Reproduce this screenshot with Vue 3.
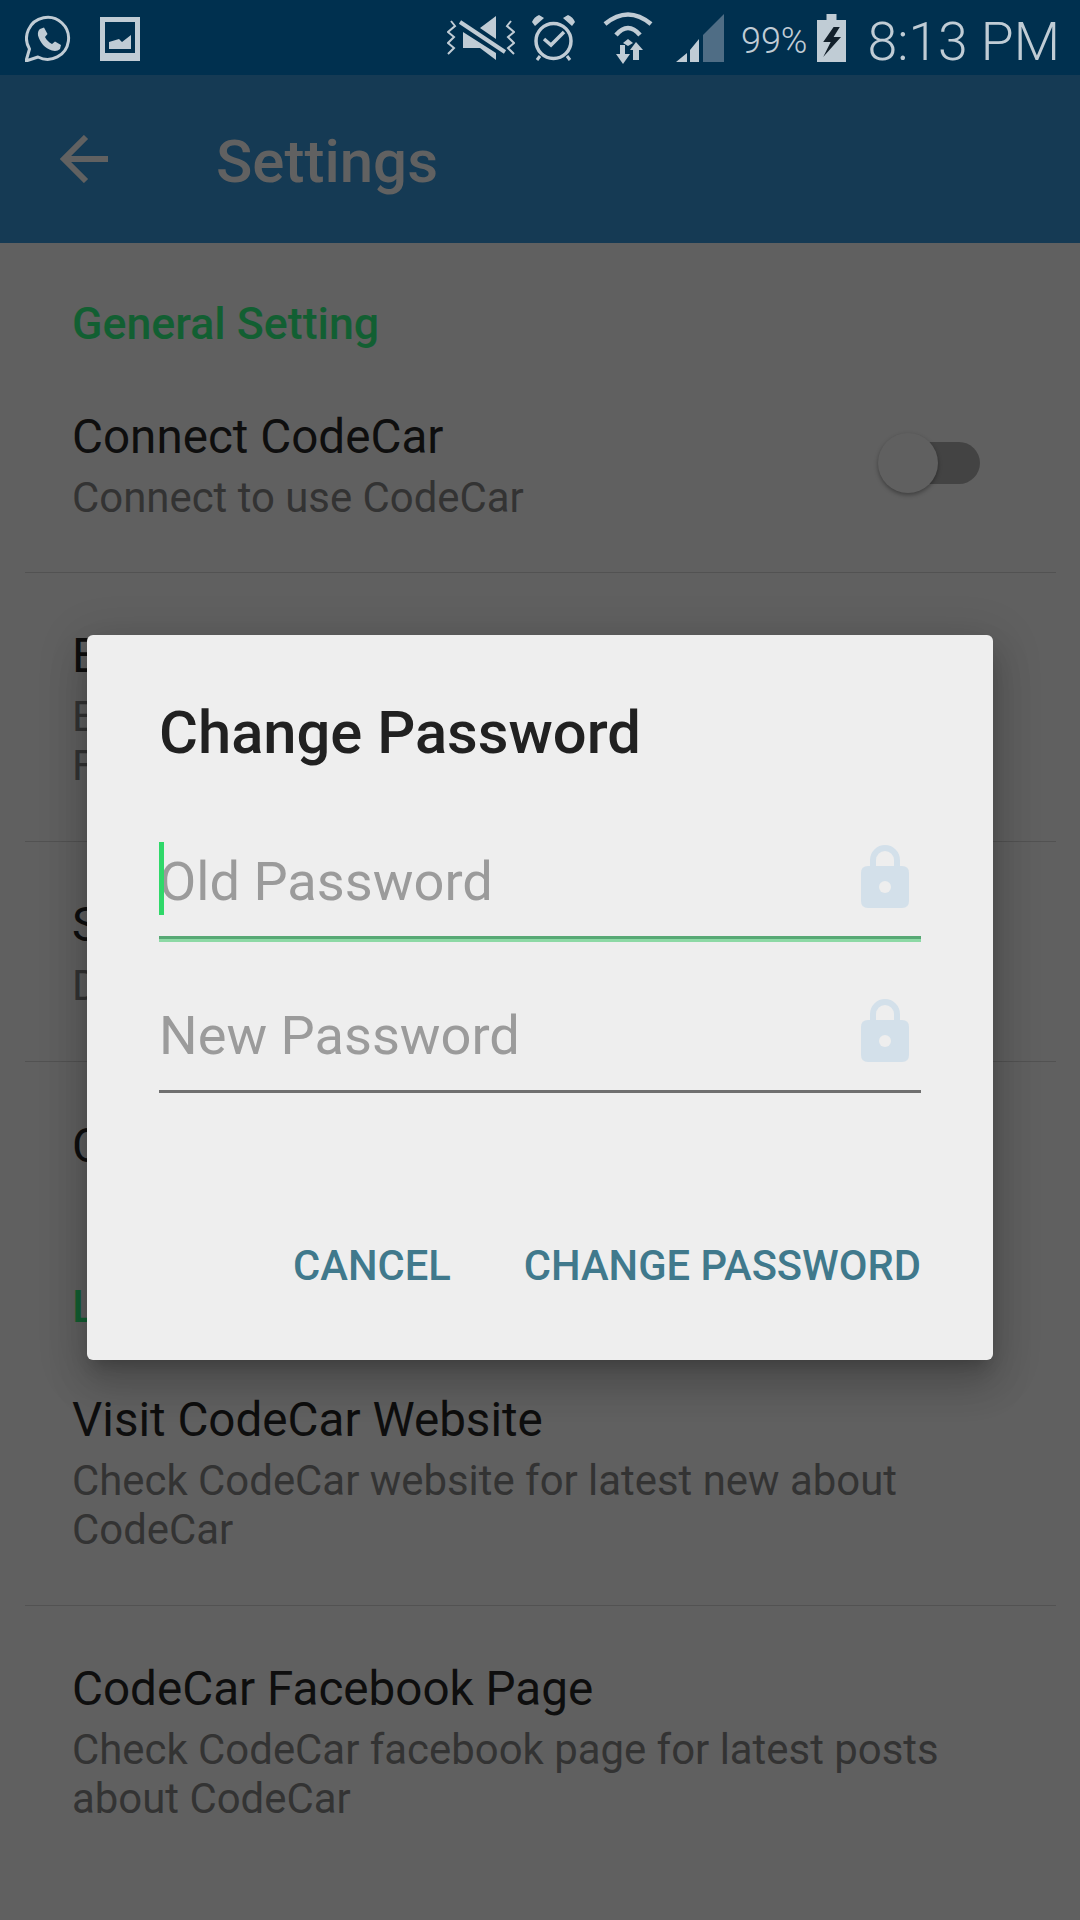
<script setup>
const lockPath = 'M9 21V15A15 15 0 0 1 39 15V21H41Q48 21 48 28V56Q48 63 41 63H7Q0 63 0 56V28Q0 21 7 21Z M15 21H33V15A9 9 0 0 0 15 15Z'
</script>

<template>
  <div class="screen">
    <header class="status">
      <div class="status-left">
        <svg width="47" height="47" viewBox="0 0 47 47">
          <path d="M1 46L4.5 34A21 21 0 1 1 13 42Z" fill="none" stroke="#c0ccd5" stroke-width="3" stroke-linejoin="round"/>
          <path d="M15 14l4-1.5l3.5 6.5l-2.5 3c1.5 3 4 5.5 7 7l3-2.5l6 3.5l-1 4c-2 2-5 2.5-8 1.5c-7-2-12-8-14-15c-.5-3 .5-5.5 2-6.5z" fill="#c0ccd5"/>
        </svg>
        <svg width="40" height="44" viewBox="0 0 40 44">
          <path d="M0 0H40V44H0Z M5 5V36H35V5Z" fill="#c0ccd5" fill-rule="evenodd"/>
          <path d="M9 32V25L19 22L22 25L31 18V32Z" fill="#c0ccd5"/>
        </svg>
      </div>
      <div class="status-right">
        <svg class="vib" width="68" height="44" viewBox="0 0 68 44">
          <path d="M4 5L8 10L1 16L7 21L1 27L7 32L1 38M64 5L60 10L67 16L61 21L67 27L61 32L67 38" fill="none" stroke="#c0ccd5" stroke-width="2"/>
          <path d="M16 16L49 37V44L33 32H16Z M33 12L49 0V23Z" fill="#c0ccd5"/>
          <path d="M13 6L58 36" stroke="#c0ccd5" stroke-width="4"/>
        </svg>
        <svg class="alarm" width="45" height="47" viewBox="0 0 45 47">
          <circle cx="22.5" cy="27" r="17.5" fill="none" stroke="#c0ccd5" stroke-width="3.5"/>
          <path d="M1 8Q3 3 8 1L13 4L4 12Z M44 8Q42 3 37 1L32 4L41 12Z" fill="#c0ccd5"/>
          <path d="M9 42L6 46M36 42L39 46" stroke="#c0ccd5" stroke-width="3"/>
          <path d="M13 25L20 31L33 18" fill="none" stroke="#c0ccd5" stroke-width="3.5"/>
        </svg>
        <svg class="wifi" width="50" height="52" viewBox="0 0 50 52">
          <path d="M2 12Q25 -7 48 12M13 23Q25 9 37 23" fill="none" stroke="#c0ccd5" stroke-width="4.5"/>
          <path d="M20 31L25 27L30 31L25 34Z" fill="#c0ccd5"/>
          <path d="M17 33H22V42H27L20 52L13 42H17Z M27 38L33 30L40 38H36V48H30V38Z" fill="#c0ccd5"/>
        </svg>
        <svg class="signal" width="48" height="48" viewBox="0 0 48 48">
          <path d="M27 21L48 0V48H27Z" fill="#4f6d85"/>
          <path d="M0 48L11 39V48Z M14 36L23 25V48H14Z" fill="#c0ccd5"/>
        </svg>
        <span class="pct">99%</span>
        <svg class="batt" width="29" height="48" viewBox="0 0 29 48">
          <path d="M9.5 0H19.5V6H29V48H0V6H9.5Z" fill="#c0ccd5"/>
          <path d="M16.6 13L6.2 28H13.7L6.2 43L24 23H16.6L22.8 13Z" fill="#13202b"/>
        </svg>
        <span class="clock">8:13 PM</span>
      </div>
    </header>

    <div class="toolbar">
      <svg width="48" height="48" viewBox="0 0 48 48">
        <path d="M48 24H4M26 2L4 24L26 46" fill="none" stroke="#616161" stroke-width="6"/>
      </svg>
      <span class="tb-title">Settings</span>
    </div>

    <main>
      <div class="section">General Setting</div>
      <div class="row r1">
        <div>
          <div class="t">Connect CodeCar</div>
          <div class="s">Connect to use CodeCar</div>
        </div>
        <div class="switch"><span class="track"></span><span class="thumb"></span></div>
      </div>
      <div class="row r2">
        <div>
          <div class="t">E</div>
          <div class="s">E<br>F</div>
        </div>
      </div>
      <div class="row r3">
        <div>
          <div class="t">S</div>
          <div class="s">D</div>
        </div>
      </div>
      <div class="row r4">
        <div class="t">C</div>
      </div>
      <div class="section s2">L</div>
      <div class="row r5">
        <div>
          <div class="t">Visit CodeCar Website</div>
          <div class="s">Check CodeCar website for latest new about<br>CodeCar</div>
        </div>
      </div>
      <div class="row r6">
        <div>
          <div class="t">CodeCar Facebook Page</div>
          <div class="s">Check CodeCar facebook page for latest posts<br>about CodeCar</div>
        </div>
      </div>
    </main>

    <section class="dialog">
      <h2>Change Password</h2>
      <div class="field focus">
        <span class="caret"></span>
        <span class="ph">Old Password</span>
        <svg width="48" height="63" viewBox="0 0 48 63"><path :d="lockPath" fill="#d3e0ea" fill-rule="evenodd"/><circle cx="24" cy="42" r="6" fill="#eeeeee"/></svg>
      </div>
      <div class="field second">
        <span class="ph">New Password</span>
        <svg width="48" height="63" viewBox="0 0 48 63"><path :d="lockPath" fill="#d3e0ea" fill-rule="evenodd"/><circle cx="24" cy="42" r="6" fill="#eeeeee"/></svg>
      </div>
      <div class="actions">
        <span>CANCEL</span>
        <span>CHANGE PASSWORD</span>
      </div>
    </section>
  </div>
</template>

<style>
html, body { margin: 0; padding: 0; background: #606060; }
</style>

<style scoped>
.screen {
  position: relative;
  width: 1080px;
  height: 1920px;
  overflow: hidden;
  background: #606060;
  font-family: Roboto, "Noto Sans", sans-serif;
}
.status {
  height: 75px;
  background: #00304f;
  display: flex;
  justify-content: space-between;
  align-items: center;
  color: #c0ccd5;
}
.status-left { display: flex; align-items: center; gap: 28px; padding-left: 25px; padding-top: 2px; }
.status-right { display: flex; align-items: center; height: 75px; padding-right: 20px; }
.vib { margin-right: 16px; }
.alarm { margin-right: 27px; }
.wifi { margin-right: 23px; }
.signal { margin-right: 17px; }
.pct { font-size: 36px; font-weight: 300; margin-right: 10px; padding-top: 6px; }
.batt { margin-right: 21px; }
.clock { font-size: 53.5px; font-weight: 300; white-space: nowrap; padding-top: 8px; }
.toolbar {
  height: 168px;
  background: #153a54;
  display: flex;
  align-items: center;
  padding-left: 60px;
}
.tb-title {
  margin-left: 108px;
  padding-top: 5px;
  color: #616161;
  font-size: 60px;
  font-weight: 500;
}
.section { color: #125f32; font-size: 44.7px; font-weight: 500; padding-left: 72px; line-height: 50px; margin-top: 56px; }
.section.s2 { margin-top: 0; }
.row {
  margin: 0 24px 0 25px;
  padding: 53px 48px 0 47px;
  display: flex;
  justify-content: space-between;
  box-sizing: border-box;
  border-bottom: 1px solid #525252;
}
.t { font-size: 47.6px; line-height: 60px; color: #0e0e0e; }
.s { font-size: 41.9px; line-height: 49px; color: #333; margin-top: 6px; }
.r1 { height: 224px; padding-top: 58px; padding-right: 76px; }
.r2 { height: 269px; }
.r3 { height: 220px; }
.r4 { height: 220px; padding-top: 54px; border-bottom: 0; }
.r5 { height: 274px; padding-top: 58px; }
.r6 { height: 250px; border-bottom: 0; }
.switch { position: relative; width: 102px; height: 60px; margin-top: 26px; }
.track { position: absolute; left: 24px; right: 0; top: 9px; height: 42px; border-radius: 21px; background: #434343; }
.thumb { position: absolute; left: 0; top: 0; width: 60px; height: 60px; border-radius: 50%; background: #606060; box-shadow: 0 2px 4px rgba(0,0,0,.35); }
.dialog {
  position: absolute;
  left: 87px;
  top: 635px;
  width: 906px;
  height: 725px;
  background: #eeeeee;
  border-radius: 6px;
  box-shadow: 0 24px 38px 3px rgba(0,0,0,.14), 0 9px 46px 8px rgba(0,0,0,.12), 0 11px 15px -7px rgba(0,0,0,.2);
  box-sizing: border-box;
  padding: 0 72px;
}
h2 {
  margin: 0;
  padding-top: 65px;
  font-size: 59.7px;
  line-height: 66px;
  font-weight: 500;
  color: #212121;
}
.field {
  position: relative;
  display: flex;
  justify-content: space-between;
  align-items: flex-start;
  border-bottom: 3px solid #6f6f6f;
  box-sizing: border-box;
  padding-right: 12px;
}
.field.focus { margin-top: 76px; height: 100px; border-bottom: 3px solid #8cd9a5; box-shadow: inset 0 -3px 0 #57a874; }
.field.second { margin-top: 54px; height: 97px; }
.ph { font-size: 54.2px; line-height: 60px; color: #9b9b9b; padding-top: 10px; }
.field svg { margin-top: 3px; }
.caret { position: absolute; left: 0; top: 0; width: 5px; height: 73px; background: #2fd869; }
.actions {
  margin-top: 149px;
  display: flex;
  justify-content: flex-end;
  gap: 73px;
  color: #40798c;
  font-size: 41.7px;
  font-weight: 500;
  line-height: 48px;
}
</style>
